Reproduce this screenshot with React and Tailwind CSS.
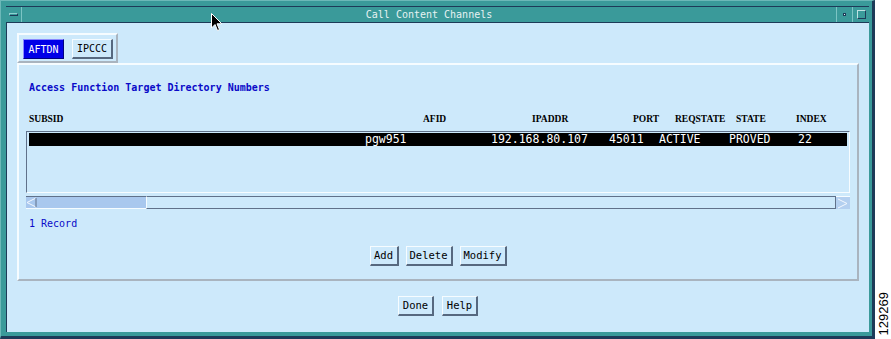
import React from 'react'

const mono = "font-['DejaVu_Sans_Mono',monospace]"

const Btn = ({ children, className = '' }) => (
  <div
    className={`h-[20px] flex items-center justify-center bg-[#cde9fb] border-t border-l border-t-[#f6fcff] border-l-[#f6fcff] border-b-2 border-r-2 border-b-[#56687f] border-r-[#56687f] text-[10.5px] text-black ${mono} ${className}`}
  >
    {children}
  </div>
)

const headers = [
  ['SUBSID', 'w-[394px]'],
  ['AFID', 'w-[109px]'],
  ['IPADDR', 'w-[101px]'],
  ['PORT', 'w-[42px]'],
  ['REQSTATE', 'w-[61px]'],
  ['STATE', 'w-[60px]'],
  ['INDEX', 'w-[40px]'],
]

const cells = [
  ['', 'w-[336px]'],
  ['pgw951', 'w-[126px]'],
  ['192.168.80.107', 'w-[118px]'],
  ['45011', 'w-[50px]'],
  ['ACTIVE', 'w-[70px]'],
  ['PROVED', 'w-[69px]'],
  ['22', 'w-[30px]'],
]

export default function App() {
  return (
    <div className="w-[891px] h-[339px] bg-white flex relative overflow-hidden">
      {/* ventana */}
      <div className="w-[875px] h-full bg-[#3a9a9a] border-t border-l border-[#6cb8b8] pt-[5px] pl-[5px] pr-[3px] pb-[4px] border-r-[3px] border-b-[3px] border-r-[#1d3a58] border-b-[#1d3a58] flex flex-col">
        {/* barra de título */}
        <div className="h-[17px] border-t border-b border-[#1d3a58] flex items-stretch">
          <div className="w-[16px] border-r border-[#7cc4c4] flex items-center justify-center">
            <div className="w-[9px] h-[3px] bg-[#3a9a9a] border border-t-[#8fd0d0] border-l-[#8fd0d0] border-b-[#1d3a58] border-r-[#1d3a58]" />
          </div>
          <div className={`flex-1 flex items-center justify-center text-[10px] text-[#e6f2f2] ${mono}`}>
            Call Content Channels
          </div>
          <div className="w-[16px] border-l border-[#7cc4c4] flex items-center justify-center">
            <div className="w-[3px] h-[3px] bg-[#d8eeee] border border-[#1d3a58]" />
          </div>
          <div className="w-[17px] border-l border-[#7cc4c4] flex items-center justify-center">
            <div className="w-[9px] h-[9px] border border-t-[#bfe2e2] border-l-[#bfe2e2] border-b-[#1d3a58] border-r-[#1d3a58]" />
          </div>
        </div>

        {/* contenido */}
        <div className="flex-1 bg-[#cde9fb] border-l border-[#1d3a58] flex flex-col px-[10px]">
          {/* pestañas */}
          <div className="mt-[10px] w-[101px] h-[30px] border-2 border-t-[#f6fcff] border-l-[#f6fcff] border-b-[#a9b4bf] border-r-[#a9b4bf] flex items-start gap-[8px] pl-[4px] pt-[4px]">
            <div className={`w-[41px] h-[20px] bg-[#0000e8] border border-t-[#8a8aff] border-l-[#8a8aff] border-b-[#000080] border-r-[#000080] text-white text-[10px] flex items-center justify-center ${mono}`}>
              AFTDN
            </div>
            <Btn className="w-[41px] text-[10px]">IPCCC</Btn>
          </div>

          {/* panel principal */}
          <div className="h-[218px] border-2 border-t-[#f6fcff] border-l-[#f6fcff] border-b-[#a9b4bf] border-r-[#a9b4bf] flex flex-col">
            <div className={`mt-[17px] pl-[10px] h-[12px] leading-[12px] text-[10px] font-bold text-[#0a0ac8] ${mono}`}>
              Access Function Target Directory Numbers
            </div>

            <div className="mt-[19px] pl-[10px] h-[12px] flex items-center font-['Liberation_Serif',serif] font-bold text-[9.5px] text-black">
              {headers.map(([h, w]) => (
                <span key={h} className={w}>{h}</span>
              ))}
            </div>

            {/* lista */}
            <div className="mt-[6px] ml-[7px] w-[824px] h-[62px] border-t border-l border-t-[#60718a] border-l-[#60718a] border-b border-r border-b-[#f6fcff] border-r-[#f6fcff] py-[1px] pl-[2px] pr-[2px]">
              <div className={`h-[13px] bg-black text-white text-[11.5px] leading-[13px] flex ${mono}`}>
                {cells.map(([c, w], i) => (
                  <span key={i} className={w}>{c}</span>
                ))}
              </div>
            </div>

            {/* barra de desplazamiento */}
            <div className="mt-[3px] ml-[7px] w-[824px] h-[13px] flex">
              <div className="w-[120px] h-full bg-[#a9c8ee] border-t border-t-[#60718a] border-b border-b-[#f6fcff] flex items-center">
                <svg width="11" height="11" viewBox="0 0 11 11">
                  <path d="M10 1 L1 5.5 L10 10" fill="none" stroke="#f4f9ff" strokeWidth="1" />
                  <path d="M10 1 L10 10" stroke="#60718a" strokeWidth="1" />
                </svg>
              </div>
              <div className="flex-1 h-full border-t border-b border-[#60718a] border-l border-l-[#f6fcff] border-r border-r-[#60718a]" />
              <div className="w-[14px] h-full bg-[#b4d0f0] border-t border-t-[#f6fcff] flex items-center">
                <svg width="13" height="11" viewBox="0 0 13 11">
                  <path d="M2 1 L11 5.5 L2 10" fill="none" stroke="#f4f9ff" strokeWidth="1" />
                </svg>
              </div>
            </div>

            <div className={`mt-[9px] pl-[10px] h-[12px] leading-[12px] text-[10px] text-[#0a0ac8] ${mono}`}>
              1 Record
            </div>

            <div className="mt-[16px] flex justify-center gap-[7px]">
              <Btn className="w-[29px]">Add</Btn>
              <Btn className="w-[47px]">Delete</Btn>
              <Btn className="w-[47px]">Modify</Btn>
            </div>
          </div>

          <div className="mt-[15px] flex justify-center gap-[8px]">
            <Btn className="w-[36px]">Done</Btn>
            <Btn className="w-[36px]">Help</Btn>
          </div>
        </div>
      </div>

      {/* número de figura */}
      <div className="flex-1 flex flex-col justify-end items-center pb-[4px]">
        <span className="[writing-mode:vertical-rl] rotate-180 font-['Liberation_Sans',sans-serif] text-[13px] leading-none text-black">
          129269
        </span>
      </div>

      {/* cursor */}
      <svg className="absolute left-[211px] top-[13px]" width="12" height="19" viewBox="0 0 12 19">
        <path d="M0.5 0.5 L0.5 15 L4 11.5 L6.5 17.5 L8.5 16.6 L6 10.8 L10.8 10.8 Z" fill="#000" stroke="#fff" strokeWidth="1" />
      </svg>
    </div>
  )
}
